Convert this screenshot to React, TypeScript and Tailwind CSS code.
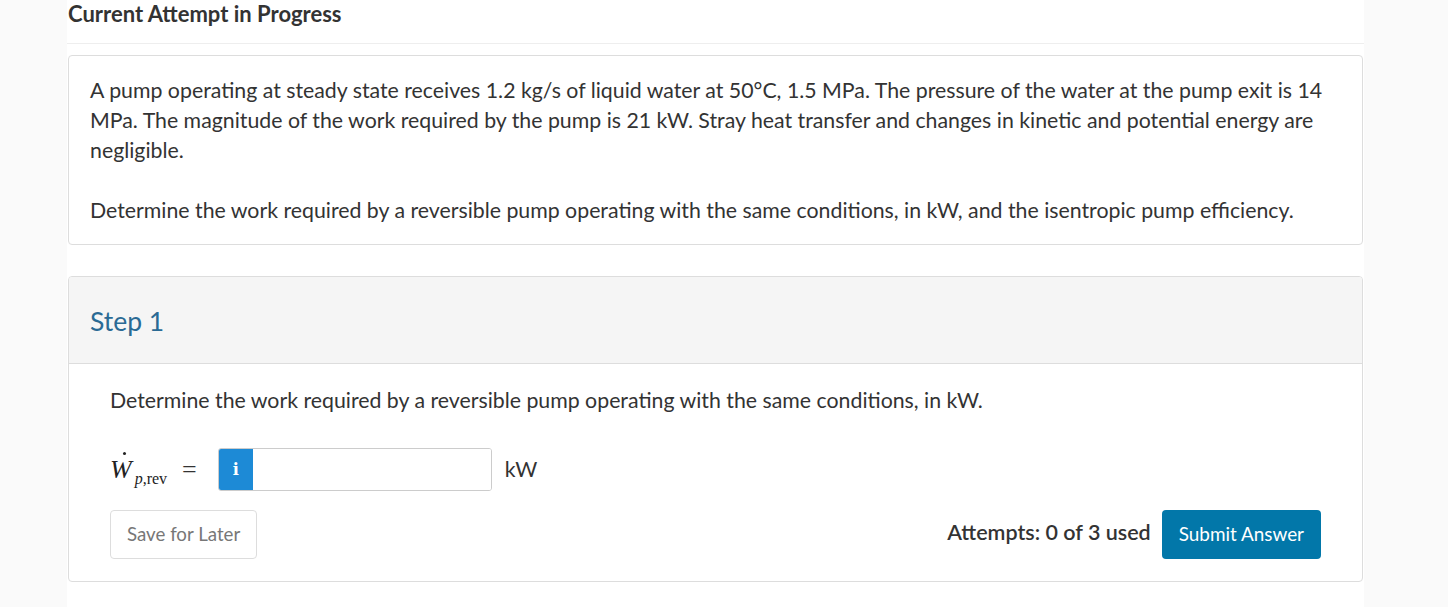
import React from 'react';

const lato = { fontFamily: 'Lato, "Open Sans", "Liberation Sans", sans-serif' };
const serif = { fontFamily: '"Liberation Serif", "DejaVu Serif", serif' };

function MathLabel() {
  return (
    <span className="inline-flex items-baseline text-[#222]" style={serif}>
      <span className="relative text-[26px] italic leading-none">
        W
        <span className="absolute left-[13px] top-[-5px] h-[3px] w-[3px] rounded-full bg-[#222]" />
      </span>
      <span className="ml-[3px] translate-y-[6px] text-[16px] leading-none">
        <span className="italic">p</span>,rev
      </span>
    </span>
  );
}

export default function App() {
  return (
    <div className="min-h-[607px] bg-[#fafafa]" style={lato}>
      <div className="ml-[67px] w-[1297px] bg-white min-h-[607px]">
        {/* page header */}
        <div className="h-[44px] border-b border-[#eeeeee]">
          <h1 className="pl-[1px] text-[22px] font-bold leading-[28px] text-[#333]">Current Attempt in Progress</h1>
        </div>

        {/* question card */}
        <div className="mx-[1px] mt-[11px] rounded border border-[#dddddd] px-[21px] pt-[19px] pb-[19px] text-[21.3px] leading-[30px] text-[#333]">
          <p>
            A pump operating at steady state receives 1.2 kg/s of liquid water at 50°C, 1.5 MPa. The pressure of the water at the pump exit is 14 MPa. The magnitude of the work required by the pump is 21 kW. Stray heat transfer and changes in kinetic and potential energy are negligible.
          </p>
          <p className="mt-[30px]">
            Determine the work required by a reversible pump operating with the same conditions, in kW, and the isentropic pump efficiency.
          </p>
        </div>

        {/* step card */}
        <div className="mx-[1px] mt-[31px] overflow-hidden rounded border border-[#dddddd]">
          <div className="flex h-[87px] items-center border-b border-[#dddddd] bg-[#f5f5f5] px-[21px]">
            <h2 className="mt-[2px] text-[26.5px] leading-none text-[#2a6a94]">Step 1</h2>
          </div>
          <div className="px-[41px] pt-[21px] pb-[22px]">
            <p className="text-[21.3px] leading-[30px] text-[#333]">
              Determine the work required by a reversible pump operating with the same conditions, in kW.
            </p>
            <div className="mt-[33px] flex h-[43px] items-center">
              <MathLabel />
              <span className="ml-[15px] text-[26px] leading-none text-[#333]" style={serif}>=</span>
              <div className="ml-[21px] flex h-[43px] w-[274px] overflow-hidden rounded-[3px] border border-[#cccccc]">
                <div className="flex w-[34px] items-center justify-center bg-[#1d8ad6] text-white">
                  <span className="text-[16px] font-bold" style={{ fontFamily: '"DejaVu Serif", serif' }}>i</span>
                </div>
                <input className="flex-1 bg-white outline-none" aria-label="answer" />
              </div>
              <span className="ml-[13px] text-[21.3px] text-[#333]">kW</span>
            </div>
            <div className="mt-[19px] flex items-center justify-between">
              <button className="h-[49px] rounded border border-[#dddddd] bg-white px-[16px] text-[18.7px] text-[#777]">
                Save for Later
              </button>
              <div className="flex items-center">
                <span className="mb-[4px] text-[21.5px] font-semibold text-[#333]">Attempts: 0 of 3 used</span>
                <button className="ml-[11px] h-[49px] rounded bg-[#0277a9] px-[17px] text-[18.9px] text-white">
                  Submit Answer
                </button>
              </div>
            </div>
          </div>
        </div>
      </div>
    </div>
  );
}
